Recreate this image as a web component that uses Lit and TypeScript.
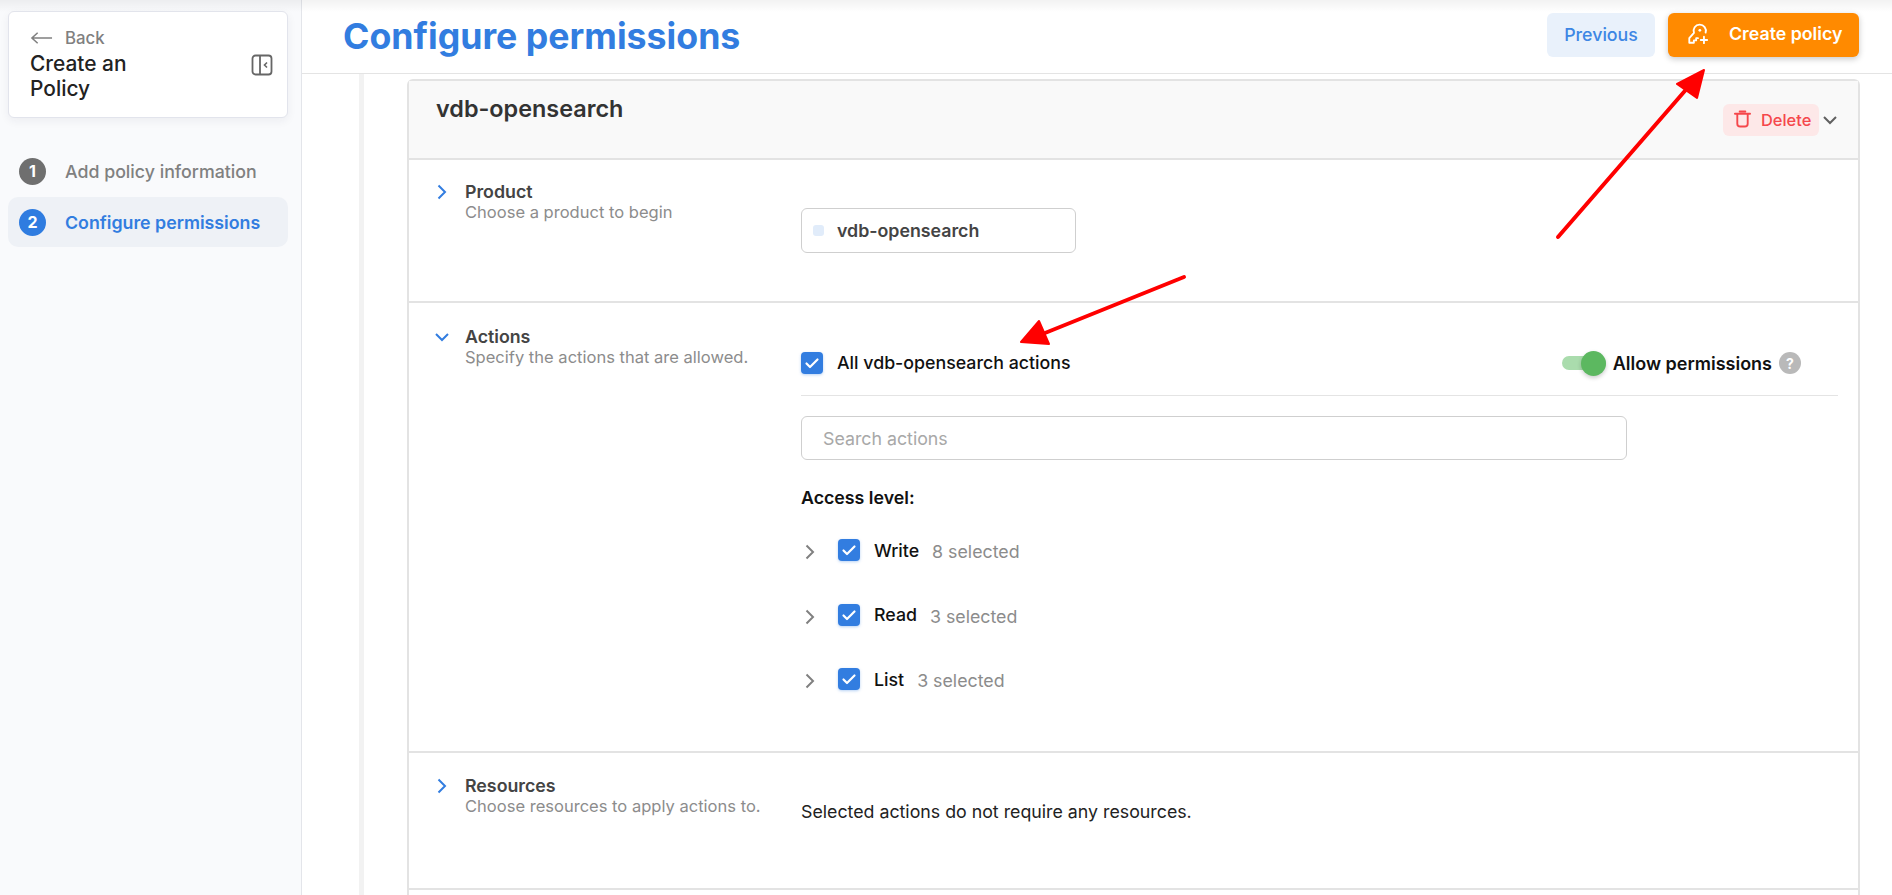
import { LitElement, html, css, svg } from 'lit';
import { customElement } from 'lit/decorators.js';

const check = html`<svg viewBox="0 0 22 22" width="22" height="22"><path d="M5.5 11.5l3.5 3.5 7.5-7.5" fill="none" stroke="#fff" stroke-width="2.2" stroke-linecap="round" stroke-linejoin="round"/></svg>`;
const chevronRight = html`<svg viewBox="0 0 12 16" width="12" height="16"><path d="M2.5 1.5L9 8l-6.5 6.5" fill="none" stroke="currentColor" stroke-width="2"/></svg>`;
const chevronDown = html`<svg viewBox="0 0 16 12" width="16" height="12" class="chev-down"><path d="M2 3l6 6 6-6" fill="none" stroke="currentColor" stroke-width="2"/></svg>`;

@customElement('app-root')
export class AppRoot extends LitElement {
  static styles = css`
    :host {
      display: flex;
      position: relative;
      width: 1892px;
      height: 895px;
      overflow: hidden;
      background: #fff;
      font-family: Inter, 'Noto Sans', sans-serif;
      font-size: 17.77px;
      color: #333;
    }

    .chev-down {
      flex: none;
    }

    .top-shade {
      position: absolute;
      inset: 0 0 auto 0;
      height: 12px;
      background: linear-gradient(rgba(0, 0, 0, 0.05), rgba(0, 0, 0, 0));
      pointer-events: none;
    }

    /* sidebar */
    .sidebar {
      width: 302px;
      flex: none;
      box-sizing: border-box;
      padding: 11px 13px 0 8px;
      background: #f9fafc;
      border-right: 1px solid #e3e5ea;
    }

    .title-card {
      box-sizing: border-box;
      height: 107px;
      padding: 16px 14px 0 21px;
      background: #fff;
      border: 1px solid #e2e4ec;
      border-radius: 6px;
      box-shadow: 0 3px 10px rgba(30, 40, 70, 0.06);
    }

    .back {
      display: flex;
      align-items: center;
      gap: 12px;
      height: 20px;
      margin-bottom: 3px;
      font-size: 16.8px;
      font-weight: 500;
      color: #808080;
    }

    .title-row {
      display: flex;
      justify-content: space-between;
      align-items: flex-start;
    }

    .title-row h2 {
      margin: 0;
      width: 130px;
      font-size: 20.9px;
      line-height: 25px;
      font-weight: 500;
      color: #222;
    }

    .title-row svg {
      margin-top: 3px;
    }

    .steps {
      margin-top: 28px;
      display: flex;
      flex-direction: column;
      gap: 1px;
    }

    .step {
      display: flex;
      align-items: center;
      gap: 19px;
      height: 50px;
      padding-left: 11px;
      border-radius: 10px;
      font-weight: 500;
      color: #808080;
    }

    .step.active {
      background: #eef1f6;
      color: #327de0;
      font-weight: 600;
    }

    .num {
      width: 27px;
      height: 27px;
      border-radius: 50%;
      background: #6f6f6f;
      color: #fff;
      display: flex;
      align-items: center;
      justify-content: center;
      font-size: 16px;
      font-weight: 700;
    }

    .step.active .num {
      background: #2f7ce0;
    }

    /* main area */
    .main {
      flex: 1;
      min-width: 0;
      display: flex;
      flex-direction: column;
    }

    .header {
      flex: none;
      box-sizing: border-box;
      height: 74px;
      padding: 0 33px 0 41px;
      display: flex;
      align-items: center;
      gap: 13px;
      border-bottom: 1px solid #e4e4e4;
    }

    .header h1 {
      margin: 0 auto 0 0;
      font-size: 35.7px;
      font-weight: 700;
      color: #327de0;
      position: relative;
      top: -1px;
    }

    .btn {
      box-sizing: border-box;
      height: 44px;
      margin-bottom: 4px;
      border-radius: 6px;
      display: flex;
      align-items: center;
      justify-content: center;
      font-weight: 500;
    }

    .btn.prev {
      width: 108px;
      background: #e9f1fb;
      color: #3d86e4;
    }

    .btn.create {
      width: 191px;
      justify-content: flex-start;
      padding: 0 0 2px 19px;
      gap: 20px;
      background: #ff8a00;
      color: #fff;
      font-weight: 600;
      box-shadow: 0 2px 6px rgba(0, 0, 0, 0.22);
    }

    .body {
      flex: 1;
      min-height: 0;
      display: flex;
      padding-left: 57px;
      overflow: hidden;
    }

    .rail {
      flex: none;
      width: 5px;
      background: #f2f2f2;
    }

    .card {
      flex: 1;
      min-width: 0;
      margin: 5px 32px 0 43px;
      border: 2px solid #e3e3e3;
      border-radius: 6px 6px 0 0;
      border-bottom: none;
      align-self: flex-start;
    }

    .card-head {
      box-sizing: border-box;
      height: 79px;
      background: #f9f9f9;
      border-bottom: 2px solid #e3e3e3;
      padding: 13px 20px 0 27px;
      display: flex;
      justify-content: space-between;
    }

    .card-head h3 {
      margin: 0;
      font-size: 23.4px;
      font-weight: 600;
      color: #333;
    }

    .head-actions {
      display: flex;
      align-items: center;
      align-self: flex-start;
      gap: 3px;
      margin-top: 10px;
      color: #606060;
    }

    .delete {
      box-sizing: border-box;
      width: 96px;
      height: 32px;
      border-radius: 6px;
      background: #fde8e8;
      color: #f5474b;
      font-size: 16.4px;
      font-weight: 500;
      display: flex;
      align-items: center;
      gap: 10px;
      padding-left: 11px;
    }

    .delete svg {
      margin-top: -3px;
    }

    .section {
      box-sizing: border-box;
      display: flex;
      border-bottom: 2px solid #e3e3e3;
      padding: 21px 20px 0 27px;
    }

    .section.product {
      height: 143px;
    }

    .section.actions {
      height: 450px;
      padding-top: 23px;
    }

    .section.resources {
      height: 137px;
      padding-top: 22px;
    }

    .section-end {
      height: 20px;
    }

    .sec-label {
      flex: none;
      width: 365px;
      display: flex;
      gap: 17px;
    }

    .sec-chevron {
      width: 12px;
      height: 21px;
      display: flex;
      align-items: center;
      justify-content: center;
      color: #327de0;
    }

    .sec-label b {
      display: block;
      line-height: 21px;
      font-weight: 600;
      color: #444;
    }

    .sec-label span {
      display: block;
      font-size: 16.55px;
      line-height: 21px;
      color: #8c8c8c;
      white-space: nowrap;
    }

    .sec-body {
      flex: 1;
      min-width: 0;
    }

    .select {
      box-sizing: border-box;
      width: 275px;
      height: 45px;
      margin-top: 27px;
      border: 1px solid #cfcfcf;
      border-radius: 6px;
      display: flex;
      align-items: center;
      gap: 13px;
      padding-left: 11px;
      font-weight: 600;
      color: #444;
    }

    .select i {
      width: 11px;
      height: 11px;
      border-radius: 3px;
      background: #e1ecfa;
    }

    .all-row {
      box-sizing: border-box;
      height: 70px;
      padding: 26px 0 0;
      display: flex;
      align-items: flex-start;
      border-bottom: 1px solid #e4e4e4;
    }

    .box {
      flex: none;
      width: 22px;
      height: 22px;
      border-radius: 4px;
      background: #327de0;
      box-shadow: 0 1px 3px rgba(50, 125, 224, 0.35);
    }

    .all-row .lbl {
      margin-left: 14px;
      line-height: 22px;
      font-weight: 500;
      color: #111;
    }

    .allow {
      margin-left: auto;
      display: flex;
      align-items: center;
      height: 22px;
      margin-right: 37px;
    }

    .allow strong {
      margin-left: 7px;
      font-size: 18px;
      font-weight: 600;
      color: #111;
    }

    .toggle {
      position: relative;
      width: 44px;
      height: 14px;
      border-radius: 7px;
      background: #aadcad;
    }

    .toggle::after {
      content: '';
      position: absolute;
      right: 0;
      top: -5px;
      width: 25px;
      height: 25px;
      border-radius: 50%;
      background: #5cb860;
      box-shadow: 0 2px 4px rgba(0, 0, 0, 0.2);
    }

    .help {
      margin-left: 7px;
      width: 22px;
      height: 22px;
      border-radius: 50%;
      background: #b9b9b9;
      color: #fff;
      font-size: 14px;
      font-weight: 700;
      display: flex;
      align-items: center;
      justify-content: center;
    }

    .search {
      box-sizing: border-box;
      width: 826px;
      height: 44px;
      margin-top: 20px;
      border: 1px solid #cfcfcf;
      border-radius: 6px;
      display: flex;
      align-items: center;
      padding-left: 21px;
      color: #a8a8a8;
    }

    .access {
      margin-top: 28px;
      line-height: 20px;
      font-weight: 600;
      color: #111;
    }

    .levels {
      margin-top: 31px;
      display: flex;
      flex-direction: column;
      gap: 42.5px;
    }

    .level {
      display: flex;
      align-items: center;
      height: 22px;
      color: #808080;
    }

    .level .arrow {
      width: 12px;
      display: flex;
      margin-left: 3px;
      margin-right: 22px;
      padding-top: 4px;
    }

    .level b {
      margin-left: 14px;
      font-weight: 500;
      color: #111;
    }

    .level span {
      margin-left: 13px;
      color: #8c8c8c;
      padding-top: 3px;
    }

    .note {
      margin-top: 26px;
      color: #222;
    }

    .marks {
      position: absolute;
      inset: 0;
      pointer-events: none;
    }
  `;

  render() {
    return html`
      <aside class="sidebar">
        <div class="title-card">
          <div class="back">
            <svg viewBox="0 0 24 14" width="23" height="14"><path d="M23 7H2M8 1.5L2 7l6 5.5" fill="none" stroke="#808080" stroke-width="1.6"/></svg>
            Back
          </div>
          <div class="title-row">
            <h2>Create an Policy</h2>
            <svg viewBox="0 0 22 22" width="22" height="22"><rect x="1.5" y="1.5" width="19" height="19" rx="3" fill="none" stroke="#666" stroke-width="1.8"/><path d="M9 1.5v19" stroke="#666" stroke-width="1.8"/><path d="M16 8.5L13.5 11l2.5 2.5" fill="none" stroke="#666" stroke-width="1.6"/></svg>
          </div>
        </div>
        <div class="steps">
          <div class="step"><div class="num">1</div>Add policy information</div>
          <div class="step active"><div class="num">2</div>Configure permissions</div>
        </div>
      </aside>
      <div class="main">
        <header class="header">
          <h1>Configure permissions</h1>
          <div class="btn prev">Previous</div>
          <div class="btn create">
            <svg viewBox="0 0 24 24" width="22" height="22" fill="none" stroke="#fff" stroke-width="2" stroke-linejoin="round" stroke-linecap="round"><path d="M20.3 10.5A6.7 6.7 0 1 0 7.6 10.8L2.5 16.5V21.5H7.5V19H10V16.5H12"/><circle cx="14" cy="8" r="1.5" fill="#fff" stroke="none"/><path d="M18.5 15v7M15 18.5h7"/></svg>
            Create policy
          </div>
        </header>
        <div class="body">
          <div class="rail"></div>
          <div class="card">
            <div class="card-head">
              <h3>vdb-opensearch</h3>
              <div class="head-actions">
                <div class="delete">
                  <svg viewBox="0 0 18 19" width="17" height="18" fill="none" stroke="#f5474b" stroke-width="2" stroke-linecap="round"><path d="M1 4h16M6 1.5h6M3.5 4v10.5a3 3 0 0 0 3 3h5a3 3 0 0 0 3-3V4"/></svg>
                  Delete
                </div>
                ${chevronDown}
              </div>
            </div>
            <section class="section product">
              <div class="sec-label">
                <div class="sec-chevron">${chevronRight}</div>
                <div><b>Product</b><span>Choose a product to begin</span></div>
              </div>
              <div class="sec-body">
                <div class="select"><i></i>vdb-opensearch</div>
              </div>
            </section>
            <section class="section actions">
              <div class="sec-label">
                <div class="sec-chevron">${chevronDown}</div>
                <div><b>Actions</b><span>Specify the actions that are allowed.</span></div>
              </div>
              <div class="sec-body">
                <div class="all-row">
                  <div class="box">${check}</div>
                  <div class="lbl">All vdb-opensearch actions</div>
                  <div class="allow">
                    <div class="toggle"></div>
                    <strong>Allow permissions</strong>
                    <div class="help">?</div>
                  </div>
                </div>
                <div class="search">Search actions</div>
                <div class="access">Access level:</div>
                <div class="levels">
                  ${[['Write', 8], ['Read', 3], ['List', 3]].map(
                    ([name, count]) => html`
                      <div class="level">
                        <div class="arrow">${chevronRight}</div>
                        <div class="box">${check}</div>
                        <b>${name}</b>
                        <span>${count} selected</span>
                      </div>
                    `
                  )}
                </div>
              </div>
            </section>
            <section class="section resources">
              <div class="sec-label">
                <div class="sec-chevron">${chevronRight}</div>
                <div><b>Resources</b><span>Choose resources to apply actions to.</span></div>
              </div>
              <div class="sec-body">
                <div class="note">Selected actions do not require any resources.</div>
              </div>
            </section>
            <div class="section-end"></div>
          </div>
        </div>
      </div>
      <div class="top-shade"></div>
      <svg class="marks" viewBox="0 0 1892 895" width="1892" height="895">
        ${svg`<path d="M1558 237L1690 85" stroke="#f00" stroke-width="4" stroke-linecap="round"/>
        <path d="M1704 70L1677 84L1697 98Z" fill="#f00" stroke="#f00" stroke-width="2" stroke-linejoin="round"/>
        <path d="M1184 277L1045 333" stroke="#f00" stroke-width="4" stroke-linecap="round"/>
        <path d="M1021 342L1039 321L1049 344Z" fill="#f00" stroke="#f00" stroke-width="2" stroke-linejoin="round"/>`}
      </svg>
    `;
  }
}
